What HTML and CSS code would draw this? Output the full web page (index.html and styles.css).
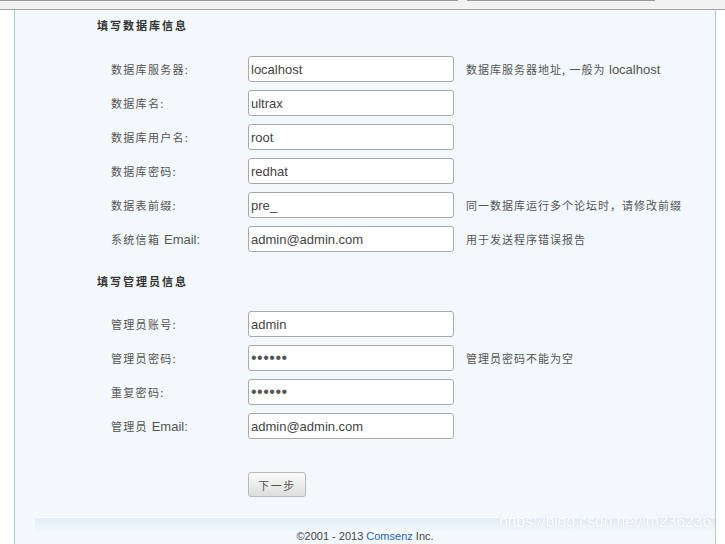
FILE: index.html
```html
<!DOCTYPE html>
<html lang="zh-CN">
<head>
<meta charset="utf-8">
<title>填写数据库信息</title>
<link rel="stylesheet" href="styles.css">
</head>
<body>
<div class="topbar">
  <div class="edge edge-a"></div>
  <div class="edge edge-b"></div>
</div>
<div class="panel">
  <div class="section-title">填写数据库信息</div>
  <div class="form-grid">
    <div class="label">数据库服务器:</div>
    <input class="field" type="text" value="localhost">
    <div class="hint">数据库服务器地址, 一般为 <span class="en">localhost</span></div>

    <div class="label">数据库名:</div>
    <input class="field" type="text" value="ultrax">
    <div class="hint"></div>

    <div class="label">数据库用户名:</div>
    <input class="field" type="text" value="root">
    <div class="hint"></div>

    <div class="label">数据库密码:</div>
    <input class="field" type="text" value="redhat">
    <div class="hint"></div>

    <div class="label">数据表前缀:</div>
    <input class="field" type="text" value="pre_">
    <div class="hint">同一数据库运行多个论坛时，请修改前缀</div>

    <div class="label">系统信箱 <span class="en">Email:</span></div>
    <input class="field" type="text" value="admin@admin.com">
    <div class="hint">用于发送程序错误报告</div>
  </div>

  <div class="section-title second">填写管理员信息</div>
  <div class="form-grid">
    <div class="label">管理员账号:</div>
    <input class="field" type="text" value="admin">
    <div class="hint"></div>

    <div class="label">管理员密码:</div>
    <input class="field pwd" type="password" value="123456">
    <div class="hint">管理员密码不能为空</div>

    <div class="label">重复密码:</div>
    <input class="field pwd" type="password" value="123456">
    <div class="hint"></div>

    <div class="label">管理员 <span class="en">Email:</span></div>
    <input class="field" type="text" value="admin@admin.com">
    <div class="hint"></div>
  </div>

  <div class="actions">
    <button class="btn" type="button">下一步</button>
  </div>

  <div class="footer-band"></div>
  <div class="footer">©2001 - 2013 <a class="link" href="#">Comsenz</a> Inc.</div>
</div>
<div class="watermark">https://blog.csdn.net/lm236236</div>
</body>
</html>
```

FILE: styles.css
```css
html, body {
  margin: 0;
  padding: 0;
  background: #ffffff;
  font-family: "Liberation Sans", "Noto Sans CJK SC", sans-serif;
  color: #555;
  overflow: hidden;
}

body {
  position: relative;
  height: 544px;
}

.topbar {
  height: 9px;
  background: #f2f2f2;
  border-bottom: 1px solid #a4a4a4;
  display: flex;
  gap: 9px;
}

.edge {
  height: 1px;
  background: #9a9a9a;
}

.edge-a { width: 458px; }
.edge-b { width: 188px; }

.panel {
  margin-left: 14px;
  width: 700px;
  border-left: 1px solid #a9d1dc;
  border-right: 1px solid #a9d1dc;
  background: #f3f8fc;
  padding-top: 5px;
  height: 529px;
  overflow: hidden;
}

.section-title {
  margin-left: 82px;
  height: 20px;
  line-height: 20px;
  font-size: 11px;
  font-weight: bold;
  letter-spacing: 2px;
  color: #333;
  font-family: "Noto Sans CJK SC", sans-serif;
}

.section-title.second {
  margin-top: 19px;
}

.form-grid {
  margin-top: 21px;
  display: grid;
  grid-template-columns: 125px 206px auto;
  grid-auto-rows: 26px;
  row-gap: 8px;
  column-gap: 12px;
  padding-left: 96px;
  align-items: center;
}

.section-title.second + .form-grid {
  margin-top: 20px;
}

.label {
  font-family: "Noto Sans CJK SC", sans-serif;
  font-size: 11px;
  letter-spacing: 1.3px;
  color: #555;
}

.hint {
  font-family: "Noto Sans CJK SC", sans-serif;
  font-size: 11px;
  letter-spacing: 1px;
  color: #555;
}

.en {
  font-family: "Liberation Sans", sans-serif;
  font-size: 13px;
  letter-spacing: 0;
}

.field {
  box-sizing: border-box;
  width: 206px;
  height: 26px;
  margin: 0;
  padding: 0 2px;
  border: 1px solid #a9a9a9;
  border-radius: 3px;
  background: #ffffff;
  font-family: "Liberation Sans", sans-serif;
  font-size: 13px;
  color: #444;
  outline: none;
}

.field.pwd {
  letter-spacing: 0.5px;
  font-size: 16px;
  color: #555;
}

.actions {
  margin-top: 33px;
  padding-left: 233px;
}

.btn {
  width: 58px;
  height: 25px;
  margin: 0;
  padding: 0;
  border: 1px solid #b9b9b9;
  border-radius: 3px;
  background: linear-gradient(#fbfbfb, #dedede);
  font-family: "Noto Sans CJK SC", sans-serif;
  font-size: 11px;
  letter-spacing: 1.5px;
  color: #555;
}

.footer-band {
  margin-top: 20px;
  margin-left: 20px;
  height: 13px;
  border-top: 1px solid #fbfdff;
  background: linear-gradient(#e2edf7, #f1f7fc);
}

.footer {
  text-align: center;
  font-size: 11px;
  line-height: 14px;
  margin-top: -2px;
  color: #444;
}

.link {
  color: #1f63b4;
  text-decoration: none;
}

.watermark {
  position: absolute;
  left: 499px;
  top: 513px;
  font-family: "Liberation Sans", sans-serif;
  font-size: 16px;
  color: #ffffff;
  text-shadow: 0 0 1px #c4ccd4;
  letter-spacing: -0.2px;
}
```
